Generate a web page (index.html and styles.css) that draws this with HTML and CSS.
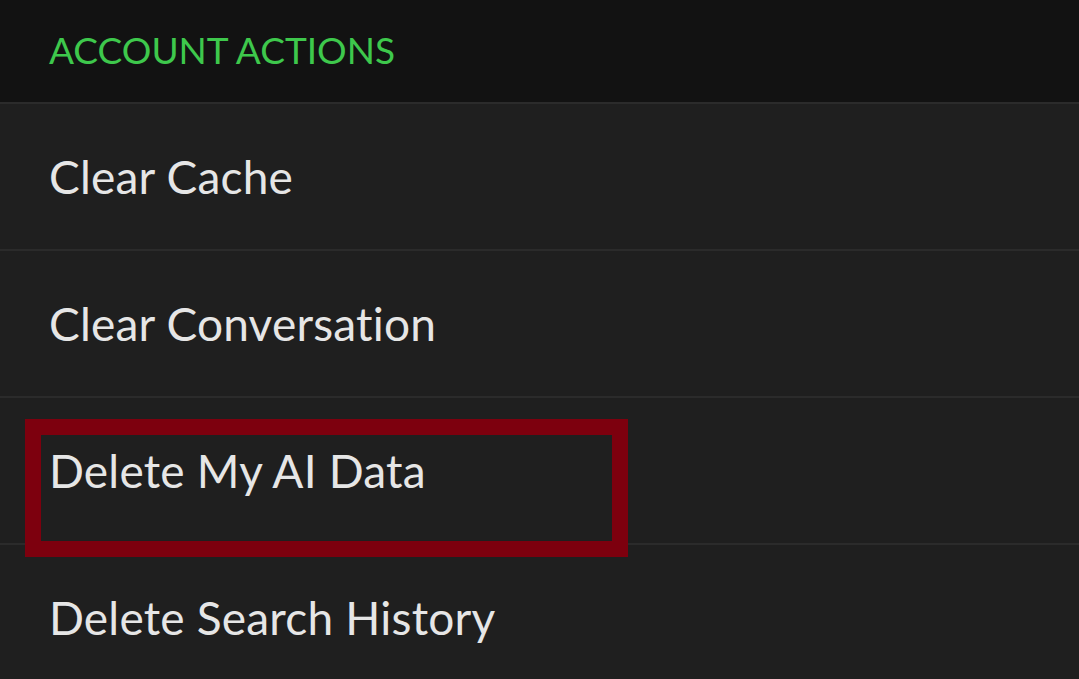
FILE: index.html
```html
<!DOCTYPE html>
<html>
<head>
<meta charset="utf-8">
<link rel="stylesheet" href="styles.css">
</head>
<body>
<div class="screen">
  <div class="section-header">ACCOUNT ACTIONS</div>
  <div class="row">Clear Cache</div>
  <div class="row">Clear Conversation</div>
  <div class="row highlighted">Delete My AI Data<span class="highlight-box"></span></div>
  <div class="row">Delete Search History</div>
</div>
</body>
</html>
```

FILE: styles.css
```css
html, body {
  margin: 0;
  padding: 0;
  background: #1f1f1f;
}
.screen {
  width: 1079px;
  height: 679px;
  overflow: hidden;
  background: #1f1f1f;
  font-family: "Lato", "Noto Sans", sans-serif;
  font-variant-ligatures: none;
}
.section-header {
  box-sizing: border-box;
  height: 104px;
  background: #121212;
  border-bottom: 2px solid #2b2b2b;
  color: #3ec84c;
  font-size: 37px;
  padding-left: 49px;
  padding-bottom: 4px;
  display: flex;
  align-items: center;
}
.row {
  position: relative;
  height: 147px;
  box-sizing: border-box;
  border-bottom: 2px solid #2b2b2b;
  color: #e6e6e6;
  font-size: 46px;
  letter-spacing: 0.2px;
  padding-left: 49px;
  display: flex;
  align-items: center;
}
.highlight-box {
  position: absolute;
  left: 25px;
  top: 21px;
  width: 603px;
  height: 138px;
  box-sizing: border-box;
  border: 16px solid #7d000e;
  pointer-events: none;
}
```
